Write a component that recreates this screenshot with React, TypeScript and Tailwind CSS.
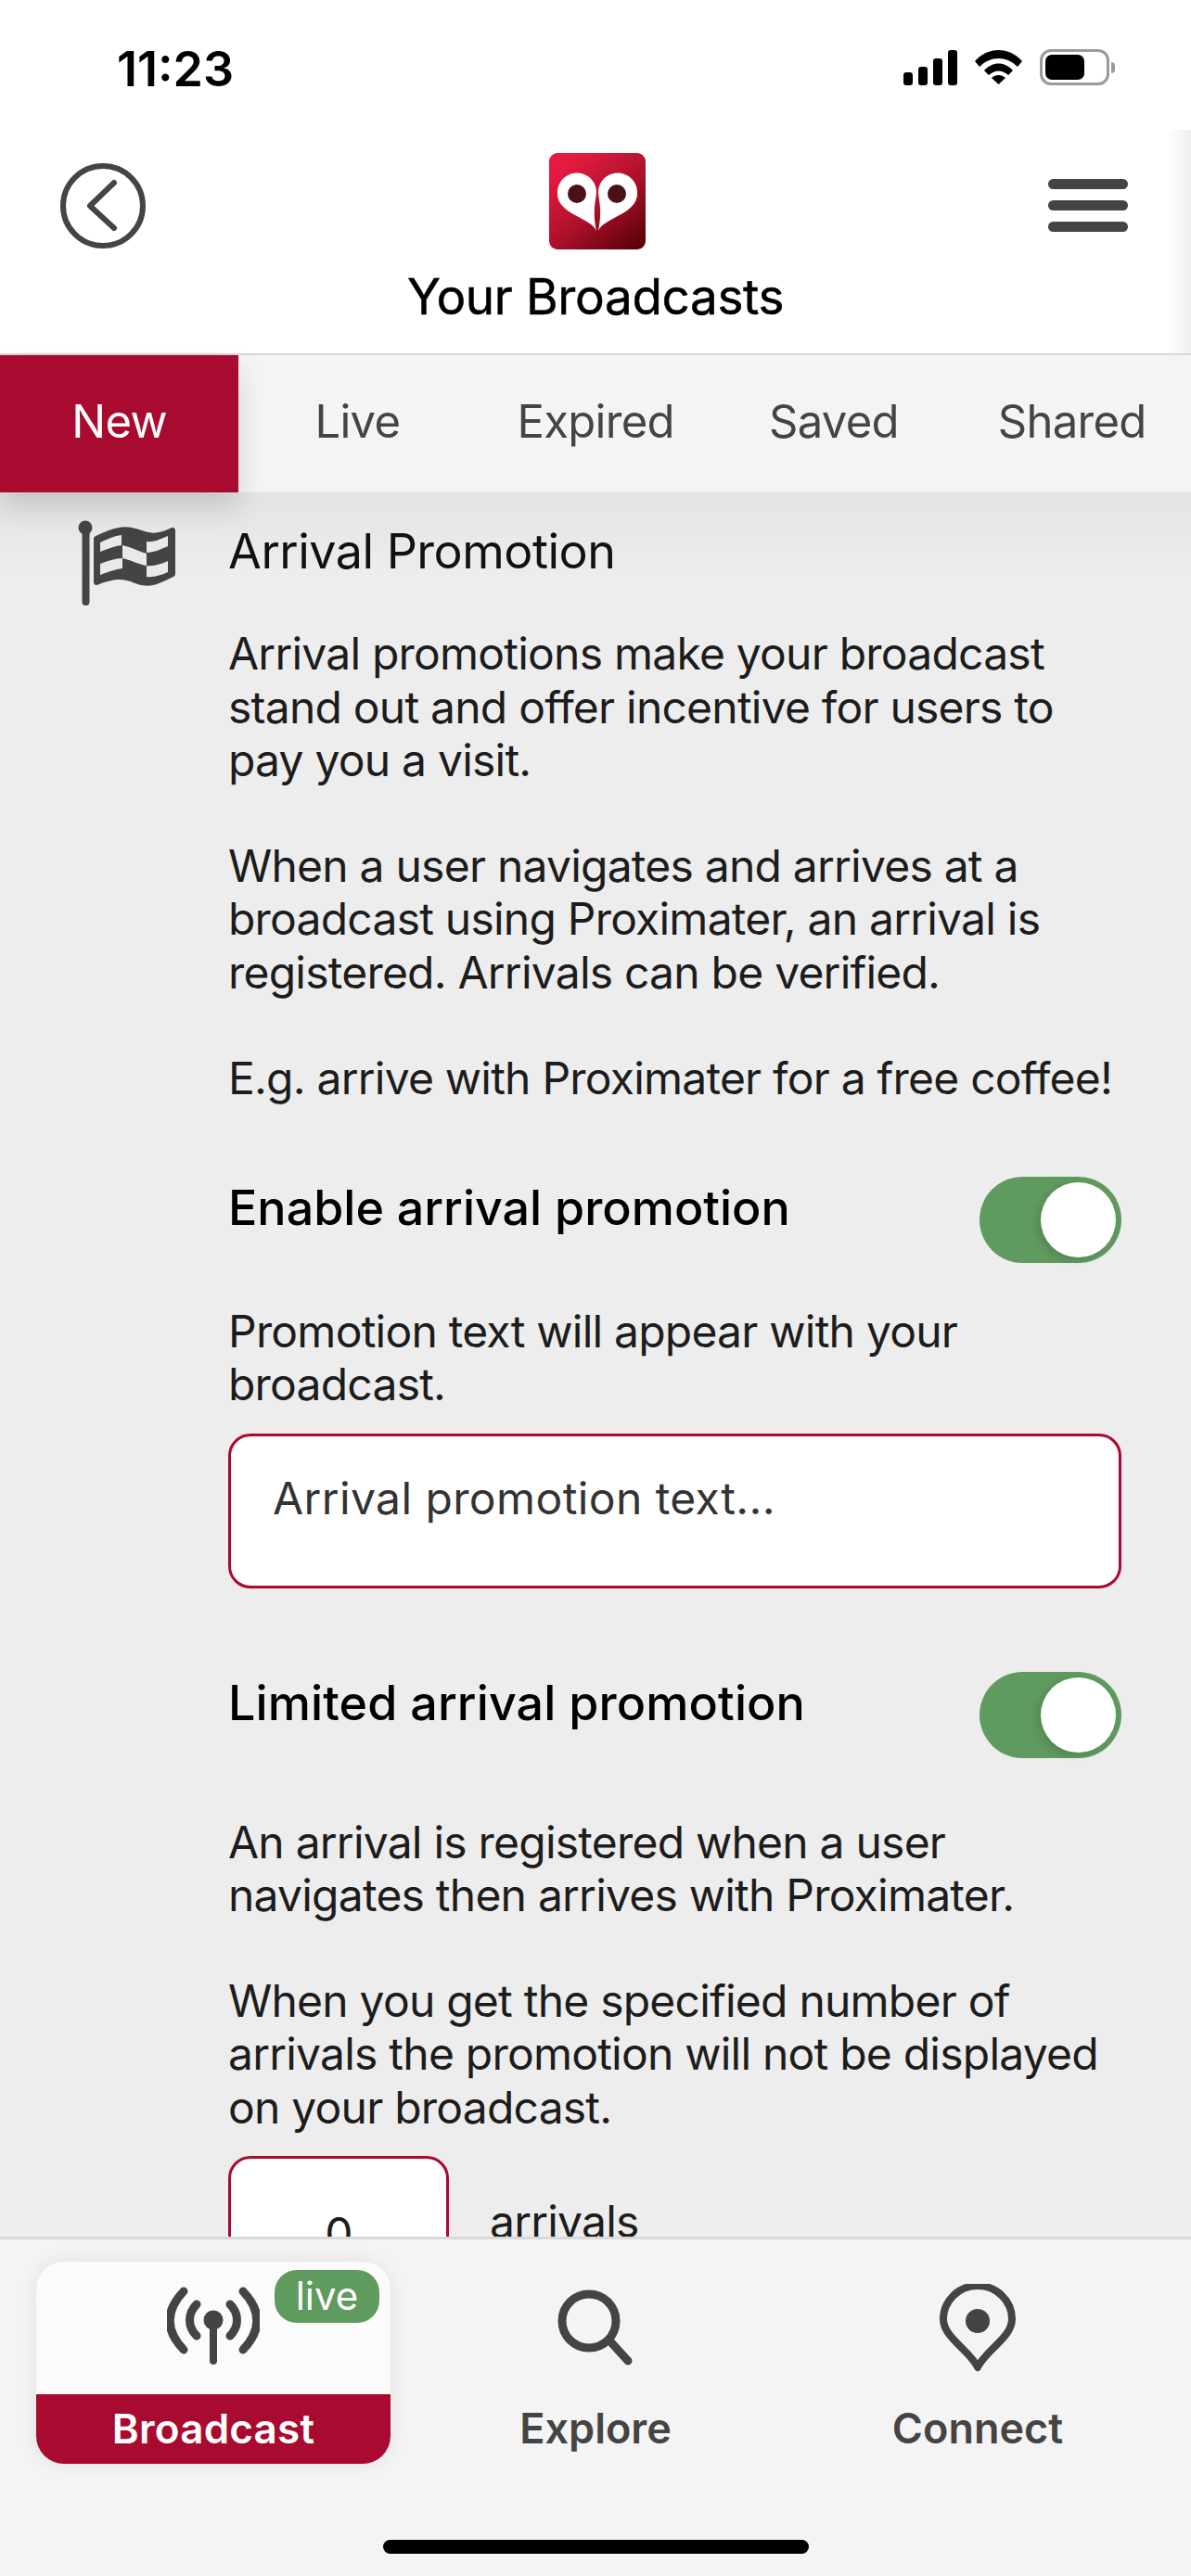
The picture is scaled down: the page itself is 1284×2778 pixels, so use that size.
const ink = "#444444";

function BackIcon() {
	return (
		<svg width="92" height="92" viewBox="0 0 92 92" fill="none" stroke={ink} strokeWidth="6" strokeLinecap="round" strokeLinejoin="round">
			<circle cx="46" cy="46" r="43" />
			<path d="M58 21 L32 46 L58 70" />
		</svg>
	);
}

function Logo() {
	return (
		<svg width="104" height="104" viewBox="0 0 104 104">
			<defs>
				<linearGradient id="logo-red" x1="0.15" y1="0" x2="0.95" y2="1">
					<stop offset="0.1" stopColor="#e31b40" />
					<stop offset="0.55" stopColor="#a81029" />
					<stop offset="1" stopColor="#560006" />
				</linearGradient>
			</defs>
			<rect width="104" height="104" rx="9" fill="url(#logo-red)" />
			<path d="M51 84 C46 70 9 66 9 44 A21 21 0 0 1 51 41 C51 50 46 60 51 84 Z" fill="#fff" />
			<path d="M53 84 C58 70 95 66 95 44 A21 21 0 0 0 53 41 C53 50 58 60 53 84 Z" fill="#fff" />
			<circle cx="30" cy="44" r="10" fill="#4b1118" />
			<circle cx="73" cy="44" r="10" fill="#4b1118" />
		</svg>
	);
}

function FlagIcon() {
	return (
		<svg width="160" height="130" viewBox="0 0 160 130">
			<circle cx="32" cy="29" r="7.5" fill={ink} />
			<rect x="28.5" y="29" width="8" height="84" rx="4" fill={ink} />
			<path
				fillRule="evenodd"
				fill={ink}
				stroke={ink}
				strokeWidth="6"
				strokeLinejoin="round"
				d="M44 41 C62 32 74 29 86 33 C100 38 108 41 126 32 L126 79 C108 88 100 92 86 86 C72 80 62 81 44 88 Z"
			/>
			<g fill="#e9e9e9">
				<path d="M48 45 C56 41 63 38 71 37 L71 48 C63 49 56 52 48 55 Z" />
				<path d="M72 48 C82 50 90 55 98 57 L98 70 C90 69 82 64 72 62 Z" />
				<path d="M98 44 C106 45 114 41 121 38 L121 49 C114 52 106 56 98 56 Z" />
				<path d="M48 68 C56 65 64 62 72 62 L72 73 C64 74 56 77 48 80 Z" />
				<path d="M98 70 C106 71 114 68 121 65 L121 77 C114 80 106 83 98 82 Z" />
			</g>
		</svg>
	);
}

function AntennaIcon() {
	return (
		<svg width="100" height="85" viewBox="0 0 100 85" fill="none" stroke={ink} strokeLinecap="round">
			<circle cx="50" cy="36" r="10.5" fill={ink} stroke="none" />
			<path d="M50 38 V80" strokeWidth="8" />
			<path d="M32 19 C22 29 22 43 32 53" strokeWidth="9" />
			<path d="M68 19 C78 29 78 43 68 53" strokeWidth="9" />
			<path d="M18 5 C-2 26 -2 47 18 68" strokeWidth="9" />
			<path d="M82 5 C102 26 102 47 82 68" strokeWidth="9" />
		</svg>
	);
}

function SearchIcon() {
	return (
		<svg width="82" height="82" viewBox="0 0 82 82" fill="none" stroke={ink} strokeWidth="9" strokeLinecap="round">
			<circle cx="34" cy="34" r="29" />
			<path d="M56 55 L76 77" />
		</svg>
	);
}

function PinIcon() {
	return (
		<svg width="84" height="96" viewBox="0 0 84 96" fill="none" stroke={ink} strokeWidth="8" strokeLinejoin="round">
			<path d="M42 90 C34 72 5 58 5 38 A37 36 0 0 1 79 38 C79 58 50 72 42 90 Z" />
			<circle cx="42" cy="40" r="13" fill={ink} stroke="none" />
		</svg>
	);
}

function StatusIcons() {
	return (
		<div className="flex items-center gap-[19px]">
			<div className="flex items-end gap-[6px]">
				<span className="h-[14px] w-[10px] rounded-[3px] bg-black" />
				<span className="h-[20px] w-[10px] rounded-[3px] bg-black" />
				<span className="h-[29px] w-[10px] rounded-[3px] bg-black" />
				<span className="h-[38px] w-[10px] rounded-[3px] bg-black" />
			</div>
			<svg width="51" height="37" viewBox="0 0 51 37" fill="#000">
				<path d="M0 12 C14 -4 37 -4 51 12 L46 18 C34 6 17 6 5 18 Z" />
				<path d="M10 22 C19 12 32 12 41 22 L36 27 C29 21 22 21 15 27 Z" />
				<path d="M25.5 37 L18 30 C22 26 29 26 33 30 Z" />
			</svg>
			<div className="flex items-center">
				<div className="flex h-[39px] w-[75px] items-center rounded-[12px] border-[3px] border-[#9a9a9a] px-[3px]">
					<span className="h-[27px] w-[42px] rounded-[7px] bg-black" />
				</div>
				<span className="ml-[2px] h-[12px] w-[4px] rounded-r-full bg-[#9a9a9a]" />
			</div>
		</div>
	);
}

function Toggle() {
	return (
		<div className="flex h-[93px] w-[153px] shrink-0 items-center justify-end rounded-full bg-[#5f9a5f] pr-[6px]">
			<span className="size-[81px] rounded-full bg-white shadow-[-4px_3px_8px_rgba(0,0,0,0.12)]" />
		</div>
	);
}

function Header() {
	return (
		<div className="relative h-[241px] shrink-0 bg-white">
			<div className="flex h-[129px] items-start justify-between pl-[65px] pr-[68px]">
				<div className="mt-[36px]">
					<BackIcon />
				</div>
				<div className="mt-[25px]">
					<Logo />
				</div>
				<div className="mt-[53px] flex w-[86px] flex-col gap-[12px]">
					<span className="h-[11px] rounded-full bg-[#444444]" />
					<span className="h-[11px] rounded-full bg-[#444444]" />
					<span className="h-[11px] rounded-full bg-[#444444]" />
				</div>
			</div>
			<div className="mt-[21px] text-center text-[53px] leading-[60px] tracking-[-0.35px] text-black [-webkit-text-stroke:0.5px_#000]">
				Your Broadcasts
			</div>
			<div className="absolute inset-y-0 right-0 w-[26px] bg-gradient-to-l from-[#efefef] to-white" />
		</div>
	);
}

function Tabs() {
	const tabs = ["Live", "Expired", "Saved", "Shared"];
	return (
		<div className="relative z-10 flex h-[150px] shrink-0 border-t-[2px] border-[#d9d9d9] bg-[#f4f4f4] pb-0 text-[49px] tracking-[-0.7px]">
			<div className="flex w-[257px] items-center justify-center bg-[#a90a2f] pb-[5px] text-white shadow-[0_16px_30px_rgba(0,0,0,0.14)]">
				New
			</div>
			{tabs.map((tab) => (
				<div key={tab} className="flex flex-1 items-center justify-center pb-[5px] text-[#444444]">
					{tab}
				</div>
			))}
		</div>
	);
}

function Content() {
	return (
		<div className="flex min-h-0 flex-1 overflow-hidden bg-[#ededed] bg-gradient-to-b from-[#e4e4e4] to-[#ededed] to-[90px] pr-[75px] text-[48px] leading-[57.25px] tracking-[-0.78px] text-[#1c1c1c]">
			<div className="w-[246px] shrink-0 pl-[60px] pt-[9px]">
				<FlagIcon />
			</div>
			<div className="min-w-0 flex-1 whitespace-nowrap pt-[35px]">
				<div className="text-[52px] tracking-[-0.5px] text-[#111111]">Arrival Promotion</div>
				<p className="mt-[53px]">
					Arrival promotions make your broadcast
					<br />
					stand out and offer incentive for users to
					<br />
					pay you a visit.
				</p>
				<p className="mt-[57px]">
					When a user navigates and arrives at a
					<br />
					broadcast using Proximater, an arrival is
					<br />
					registered. Arrivals can be verified.
				</p>
				<p className="mt-[57px]">E.g. arrive with Proximater for a free coffee!</p>
				<div className="mt-[78px] flex items-start justify-between">
					<div className="mt-[5px] text-[52px] font-medium leading-[57px] tracking-normal text-black">
						Enable arrival promotion
					</div>
					<Toggle />
				</div>
				<p className="mt-[45px]">
					Promotion text will appear with your
					<br />
					broadcast.
				</p>
				<div className="mt-[24px] flex h-[167px] items-start rounded-[24px] border-[3px] border-[#a90a2f] bg-white pl-[45px] pt-[38px] tracking-[0.4px] text-[#333333]">
					Arrival promotion text...
				</div>
				<div className="mt-[90px] flex items-start justify-between">
					<div className="mt-[5px] text-[52px] font-medium leading-[57px] tracking-[0.1px] text-black">
						Limited arrival promotion
					</div>
					<Toggle />
				</div>
				<p className="mt-[62px]">
					An arrival is registered when a user
					<br />
					navigates then arrives with Proximater.
				</p>
				<p className="mt-[57px]">
					When you get the specified number of
					<br />
					arrivals the promotion will not be displayed
					<br />
					on your broadcast.
				</p>
				<div className="mt-[24px] flex items-start gap-[44px]">
					<div className="flex h-[167px] w-[238px] items-center justify-center rounded-[24px] border-[3px] border-[#a90a2f] bg-white">
						0
					</div>
					<span className="mt-[42px]">arrivals</span>
				</div>
			</div>
		</div>
	);
}

function BottomNav() {
	return (
		<div className="relative h-[366px] shrink-0 border-t-[3px] border-[#d9d9d9] bg-[#f4f4f4]">
			<div className="flex pl-[39px] pt-[24px]">
				<div className="relative flex h-[218px] w-[382px] flex-col overflow-hidden rounded-[30px] bg-[#fbfbfb] shadow-[0_0_24px_rgba(0,0,0,0.08)]">
					<div className="flex h-[143px] justify-center pt-[27px]">
						<AntennaIcon />
					</div>
					<div className="flex flex-1 items-center justify-center bg-[#a90a2f] pb-[2px] text-[44px] font-semibold tracking-[0.2px] text-white">
						Broadcast
					</div>
					<span className="absolute left-[257px] top-[9px] flex h-[57px] w-[113px] items-center justify-center rounded-[24px] bg-[#5f9a5f] pb-[2px] text-[42px] text-white">
						live
					</span>
				</div>
				<div className="flex w-[442px] flex-col items-center">
					<div className="flex h-[143px] items-start pt-[30px]">
						<SearchIcon />
					</div>
					<div className="flex h-[75px] items-center pb-[2px] text-[45px] font-semibold text-[#444444]">Explore</div>
				</div>
				<div className="flex w-[382px] flex-col items-center">
					<div className="flex h-[143px] items-start pt-[24px]">
						<PinIcon />
					</div>
					<div className="flex h-[75px] items-center pb-[2px] text-[45px] font-semibold text-[#444444]">Connect</div>
				</div>
			</div>
			<div className="absolute bottom-[24px] left-[413px] h-[15px] w-[459px] rounded-full bg-black" />
		</div>
	);
}

export default function App() {
	return (
		<div className="flex h-[2778px] w-[1284px] flex-col overflow-hidden bg-white font-['Inter',sans-serif]">
			<div className="flex h-[140px] shrink-0 items-start justify-between bg-white pl-[126px] pr-[82px] pt-[46px]">
				<span className="text-[52px] font-semibold leading-[58px] text-black">11:23</span>
				<div className="pt-[7px]">
					<StatusIcons />
				</div>
			</div>
			<Header />
			<Tabs />
			<Content />
			<BottomNav />
		</div>
	);
}
